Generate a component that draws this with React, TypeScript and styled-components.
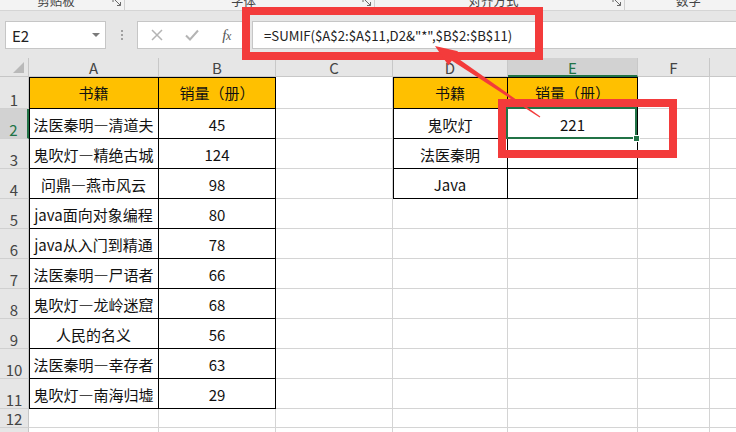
import React from "react";
import styled, { createGlobalStyle } from "styled-components";

const GlobalStyle = createGlobalStyle`
  html, body { margin: 0; padding: 0; background: #fff; }
  body { font-family: "Noto Sans CJK SC", "Noto Sans", sans-serif; }
`;

const GREEN = "#217346";
const RED = "#f33b3b";
const FONT = `"Noto Sans CJK SC", "Noto Sans", sans-serif`;

const Screen = styled.div`
  position: relative;
  width: 736px;
  height: 432px;
  overflow: hidden;
  background: #fff;
  font-family: ${FONT};
`;

/* ---------- ribbon strip ---------- */
const RibbonBand = styled.div`
  height: 10px;
  background: #f3f3f3;
  border-bottom: 1px solid #d5d5d5;
  display: flex;
  overflow: hidden;
`;

const Group = styled.div<{ $w: number }>`
  flex: 0 0 ${(p) => p.$w}px;
  box-sizing: border-box;
  display: flex;
  border-right: 1px solid #d0d0d0;
`;

const GroupLabel = styled.div`
  flex: 1;
  text-align: center;
  font-size: 12.5px;
  line-height: 12px;
  margin-top: -5px;
  color: #444;
  white-space: nowrap;
`;

const Launcher = styled.svg`
  flex: 0 0 10px;
  width: 10px;
  height: 10px;
  margin-top: -3px;
  margin-right: 2px;
`;

/* ---------- formula bar ---------- */
const FormulaArea = styled.div`
  height: 47px;
  box-sizing: border-box;
  background: #e6e6e6;
  display: flex;
  align-items: flex-start;
  padding: 10px 0 0 5px;
`;

const NameBox = styled.div`
  flex: 0 0 101px;
  height: 28px;
  box-sizing: border-box;
  background: #fff;
  border: 1px solid #c6c6c6;
  display: flex;
  align-items: center;
  justify-content: space-between;
  padding: 0 5px 0 6px;
  font-size: 15px;
  color: #222;
`;

const DropCaret = styled.span`
  width: 0;
  height: 0;
  border-left: 4px solid transparent;
  border-right: 4px solid transparent;
  border-top: 4px solid #7a7a7a;
`;

const Grip = styled.div`
  flex: 0 0 31px;
  height: 28px;
  display: flex;
  flex-direction: column;
  align-items: center;
  justify-content: center;
  gap: 2px;
`;

const GripDot = styled.span`
  width: 2px;
  height: 2px;
  background: #a0a0a0;
`;

const ButtonBox = styled.div`
  flex: 0 0 106px;
  height: 28px;
  box-sizing: border-box;
  background: #fff;
  border: 1px solid #c6c6c6;
  display: flex;
  align-items: center;
  padding-left: 1px;
  margin-right: 7px;
`;

const IconSlot = styled.div`
  flex: 0 0 35px;
  display: flex;
  align-items: center;
  justify-content: center;
`;

const Fx = styled.span`
  font-family: "Liberation Serif", "DejaVu Serif", serif;
  font-style: italic;
  font-size: 15px;
  color: #555;
  letter-spacing: -0.5px;
  & small {
    font-size: 12px;
  }
`;

const FormulaInput = styled.div`
  flex: 1;
  height: 28px;
  box-sizing: border-box;
  background: #fff;
  border: 1px solid #c6c6c6;
  border-right: none;
  display: flex;
  align-items: center;
  padding-left: 11px;
  font-size: 13.2px;
  color: #222;
  white-space: nowrap;
`;

/* ---------- sheet grid ---------- */
const colWidths = [29, 130, 117, 117, 115, 130, 72, 72];
const rowHeights = [19, 32, 30, 30, 30, 30, 30, 30, 30, 30, 30, 30, 19, 19];

const Sheet = styled.div`
  display: grid;
  width: max-content;
  grid-template-columns: ${colWidths.map((w) => `${w}px`).join(" ")};
  grid-template-rows: ${rowHeights.map((h) => `${h}px`).join(" ")};
`;

const Corner = styled.div`
  box-sizing: border-box;
  background: #e6e6e6;
  border-right: 1px solid #c6c6c6;
  border-bottom: 1px solid #c6c6c6;
  display: flex;
  align-items: flex-end;
  justify-content: flex-end;
  padding: 0 4px 3px 0;
`;

const CornerTri = styled.span`
  width: 0;
  height: 0;
  border-left: 11px solid transparent;
  border-bottom: 11px solid #b9b9b9;
`;

const ColHead = styled.div<{ $active?: boolean }>`
  box-sizing: border-box;
  background: ${(p) => (p.$active ? "#d2d2d2" : "#e6e6e6")};
  border-right: 1px solid #c8c8c8;
  border-bottom: ${(p) => (p.$active ? `2px solid ${GREEN}` : "1px solid #c8c8c8")};
  color: ${(p) => (p.$active ? GREEN : "#444")};
  display: flex;
  align-items: center;
  justify-content: center;
  font-size: 15px;
  line-height: 15px;
  padding-top: 1px;
`;

const RowHead = styled.div<{ $active?: boolean }>`
  box-sizing: border-box;
  background: ${(p) => (p.$active ? "#d2d2d2" : "#e6e6e6")};
  border-right: ${(p) => (p.$active ? `2px solid ${GREEN}` : "1px solid #c6c6c6")};
  border-bottom: 1px solid #d0d0d0;
  color: ${(p) => (p.$active ? GREEN : "#444")};
  display: flex;
  align-items: flex-end;
  justify-content: center;
  font-size: 15px;
  line-height: 15px;
  padding-bottom: 1px;
  overflow: hidden;
`;

const Cell = styled.div<{
  $fill?: boolean;
  $table?: boolean;
  $edgeL?: boolean;
  $edgeT?: boolean;
}>`
  position: relative;
  box-sizing: border-box;
  background: ${(p) => (p.$fill ? "#ffc000" : "#fff")};
  border-right: 1px solid ${(p) => (p.$table ? "#000" : "#d4d4d4")};
  border-bottom: 1px solid ${(p) => (p.$table ? "#000" : "#d4d4d4")};
  box-shadow: ${(p) =>
    [p.$edgeL ? "inset 1px 0 0 #000" : "", p.$edgeT ? "inset 0 1px 0 #000" : ""]
      .filter(Boolean)
      .join(", ") || "none"};
  display: flex;
  align-items: center;
  justify-content: center;
  padding-top: ${(p) => (p.$fill ? "0" : "2px")};
  padding-bottom: ${(p) => (p.$fill ? "1px" : "0")};
  font-size: 15px;
  line-height: 15px;
  color: #111;
  white-space: nowrap;
`;

const Dash = styled.span`
  font-feature-settings: "fwid" 1;
`;

const SelectionFrame = styled.div`
  position: absolute;
  top: -2px;
  left: -2px;
  right: 0;
  bottom: -1px;
  border: 2px solid ${GREEN};
  z-index: 2;
  pointer-events: none;
`;

const FillHandle = styled.span`
  position: absolute;
  right: -5px;
  bottom: -5px;
  width: 5px;
  height: 5px;
  background: ${GREEN};
  border: 1px solid #fff;
`;

/* ---------- annotations ---------- */
const RedBox = styled.div<{ $x: number; $y: number; $w: number; $h: number }>`
  position: absolute;
  left: ${(p) => p.$x}px;
  top: ${(p) => p.$y}px;
  width: ${(p) => p.$w}px;
  height: ${(p) => p.$h}px;
  box-sizing: border-box;
  border: 8px solid ${RED};
  z-index: 5;
  pointer-events: none;
`;

const ArrowLayer = styled.svg`
  position: absolute;
  left: 0;
  top: 0;
  width: 736px;
  height: 432px;
  z-index: 6;
  pointer-events: none;
`;

/* ---------- data ---------- */
const leftTable: [string, string][] = [
  ["书籍", "销量（册）"],
  ["法医秦明—清道夫", "45"],
  ["鬼吹灯—精绝古城", "124"],
  ["问鼎—燕市风云", "98"],
  ["java面向对象编程", "80"],
  ["java从入门到精通", "78"],
  ["法医秦明—尸语者", "66"],
  ["鬼吹灯—龙岭迷窟", "68"],
  ["人民的名义", "56"],
  ["法医秦明—幸存者", "63"],
  ["鬼吹灯—南海归墟", "29"],
];

const rightTable: [string, string][] = [
  ["书籍", "销量（册）"],
  ["鬼吹灯", "221"],
  ["法医秦明", ""],
  ["Java", ""],
];

const COLS = ["A", "B", "C", "D", "E", "F", "G"];

type CellInfo = {
  text: string;
  fill: boolean;
  table: boolean;
  edgeL: boolean;
  edgeT: boolean;
  selected: boolean;
};

function cellAt(r: number, c: number): CellInfo {
  const info: CellInfo = { text: "", fill: false, table: false, edgeL: false, edgeT: false, selected: false };
  if ((c === 0 || c === 1) && r >= 1 && r <= 11) {
    info.text = leftTable[r - 1][c];
    info.table = true;
    info.fill = r === 1;
    info.edgeL = c === 0;
    info.edgeT = r === 1;
  }
  if ((c === 3 || c === 4) && r >= 1 && r <= 4) {
    info.text = rightTable[r - 1][c - 3];
    info.table = true;
    info.fill = r === 1;
    info.edgeL = c === 3;
    info.edgeT = r === 1;
  }
  if (c === 4 && r === 2) info.selected = true;
  return info;
}

function renderText(t: string) {
  const parts = t.split("—");
  if (parts.length === 1) return t;
  return parts.map((p, i) => (
    <React.Fragment key={i}>
      {i > 0 && <Dash>—</Dash>}
      {p}
    </React.Fragment>
  ));
}

const groups = [
  { w: 125, label: "剪贴板" },
  { w: 250, label: "字体" },
  { w: 250, label: "对齐方式" },
  { w: 140, label: "数字" },
];

function LauncherIcon() {
  return (
    <Launcher viewBox="0 0 10 10">
      <path d="M1 1 H5 M1 1 V5" stroke="#6a6a6a" strokeWidth="1" fill="none" />
      <path d="M3 3 L8.5 8.5 M8.5 5 V8.5 H5" stroke="#6a6a6a" strokeWidth="1" fill="none" />
    </Launcher>
  );
}

// arrow geometry
const tip = { x: 435, y: 46 };
const tail = { x: 540, y: 117 };
const dx = tail.x - tip.x;
const dy = tail.y - tip.y;
const len = Math.hypot(dx, dy);
const ux = dx / len;
const uy = dy / len;
const px = -uy;
const py = ux;
const headLen = 22;
const headHalf = 8.5;
const bx = tip.x + ux * headLen;
const by = tip.y + uy * headLen;
const pt = (x: number, y: number) => `${x.toFixed(1)},${y.toFixed(1)}`;
const headPoints = [
  pt(tip.x, tip.y),
  pt(bx + px * headHalf, by + py * headHalf),
  pt(bx - px * headHalf, by - py * headHalf),
].join(" ");
const shaftPoints = [
  pt(bx - ux * 2 + px * 2.8, by - uy * 2 + py * 2.8),
  pt(tail.x + px * 0.6, tail.y + py * 0.6),
  pt(tail.x - px * 0.6, tail.y - py * 0.6),
  pt(bx - ux * 2 - px * 2.8, by - uy * 2 - py * 2.8),
].join(" ");

export default function App() {
  const rows = Array.from({ length: 13 }, (_, i) => i + 1);
  return (
    <>
      <GlobalStyle />
      <Screen>
        <RibbonBand>
          {groups.map((g) => (
            <Group key={g.label} $w={g.w}>
              <GroupLabel>{g.label}</GroupLabel>
              <LauncherIcon />
            </Group>
          ))}
        </RibbonBand>

        <FormulaArea>
          <NameBox>
            <span>E2</span>
            <DropCaret />
          </NameBox>
          <Grip>
            <GripDot />
            <GripDot />
            <GripDot />
          </Grip>
          <ButtonBox>
            <IconSlot>
              <svg width="12" height="12" viewBox="0 0 12 12">
                <path d="M1 1 L11 11 M11 1 L1 11" stroke="#b4b4b4" strokeWidth="1.5" />
              </svg>
            </IconSlot>
            <IconSlot>
              <svg width="14" height="12" viewBox="0 0 14 12">
                <path d="M1 6.5 L5 10.5 L13 1.5" stroke="#b4b4b4" strokeWidth="2" fill="none" />
              </svg>
            </IconSlot>
            <IconSlot>
              <Fx>
                f<small>x</small>
              </Fx>
            </IconSlot>
          </ButtonBox>
          <FormulaInput>{'=SUMIF($A$2:$A$11,D2&"*",$B$2:$B$11)'}</FormulaInput>
        </FormulaArea>

        <Sheet>
          <Corner>
            <CornerTri />
          </Corner>
          {COLS.map((c) => (
            <ColHead key={c} $active={c === "E"}>
              {c}
            </ColHead>
          ))}
          {rows.map((r) => (
            <React.Fragment key={r}>
              <RowHead $active={r === 2}>{r}</RowHead>
              {COLS.map((_, c) => {
                const info = cellAt(r, c);
                return (
                  <Cell
                    key={c}
                    $fill={info.fill}
                    $table={info.table}
                    $edgeL={info.edgeL}
                    $edgeT={info.edgeT}
                  >
                    {renderText(info.text)}
                    {info.selected && (
                      <SelectionFrame>
                        <FillHandle />
                      </SelectionFrame>
                    )}
                  </Cell>
                );
              })}
            </React.Fragment>
          ))}
        </Sheet>

        <RedBox $x={242} $y={7} $w={301} $h={53} />
        <RedBox $x={498} $y={99} $w={179} $h={59} />
        <ArrowLayer viewBox="0 0 736 432">
          <polygon points={shaftPoints} fill={RED} />
          <polygon points={headPoints} fill={RED} />
        </ArrowLayer>
      </Screen>
    </>
  );
}
